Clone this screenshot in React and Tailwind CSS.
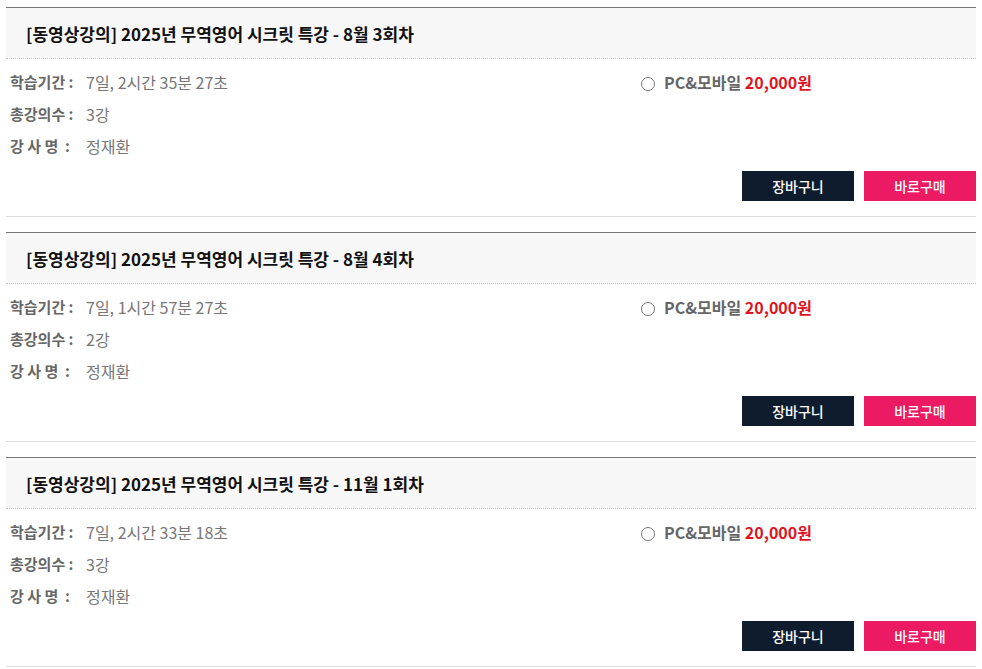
import React from 'react';

const courses = [
  { title: '[동영상강의] 2025년 무역영어 시크릿 특강 - 8월 3회차', period: '7일, 2시간 35분 27초', count: '3강' },
  { title: '[동영상강의] 2025년 무역영어 시크릿 특강 - 8월 4회차', period: '7일, 1시간 57분 27초', count: '2강' },
  { title: '[동영상강의] 2025년 무역영어 시크릿 특강 - 11월 1회차', period: '7일, 2시간 33분 18초', count: '3강' },
];

const InfoRow = ({ label, value }) => (
  <div className="flex items-center h-[32px]">
    <span className="font-bold text-[15px] leading-[32px] text-[#666] w-[76px] whitespace-pre">{label}</span>
    <span className="text-[16px] leading-[32px] text-[#777]">{value}</span>
  </div>
);

const CourseCard = ({ course }) => {
  return (
    <div className="border-t border-[#777] border-b border-b-[#dcdcdc] mb-[15px]">
      {/* 제목 */}
      <div className="bg-[#f7f7f7] h-[51px] flex items-center pl-[20px] pt-[1px] border-b border-dotted border-[#c8c8c8]">
        <h3 className="text-[17px] font-bold text-[#111]">{course.title}</h3>
      </div>

      <div className="flex pt-[7px] pl-[4px]">
        <div className="w-[631px]">
          <InfoRow label="학습기간 :" value={course.period} />
          <InfoRow label="총강의수 :" value={course.count} />
          <InfoRow label="강 사 명  :" value="정재환" />
        </div>
        <div className="flex items-center h-[32px] gap-[9px]">
          <span className="w-[14px] h-[14px] rounded-full border border-[#777] bg-white mt-[4px]" />
          <span className="text-[16px] font-bold text-[#666]">
            PC&amp;모바일 <span className="text-[#e0141e]">20,000원</span>
          </span>
        </div>
      </div>

      <div className="flex justify-end gap-[10px] mt-[9px] mb-[15px]">
        <button className="w-[112px] h-[30px] bg-[#0f1c2e] text-white text-[14px] font-medium">장바구니</button>
        <button className="w-[112px] h-[30px] bg-[#ec1a62] text-white text-[14px] font-medium">바로구매</button>
      </div>
    </div>
  );
};

export default function App() {
  return (
    <div className="min-h-screen bg-white pt-[7px] px-[6px] font-['Noto_Sans_CJK_KR','Noto_Sans',sans-serif]">
      {courses.map((c, i) => (
        <CourseCard key={i} course={c} />
      ))}
    </div>
  );
}
